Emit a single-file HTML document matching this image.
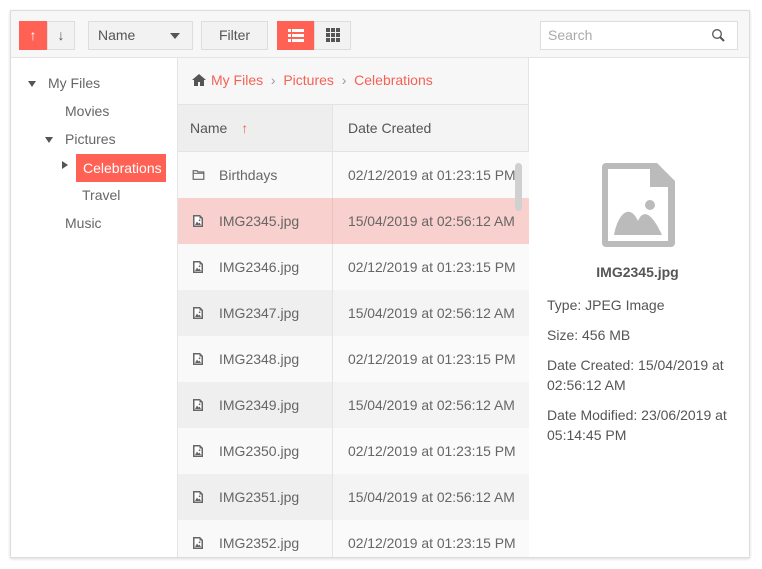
<!DOCTYPE html>
<html><head><meta charset="utf-8"><style>
*{box-sizing:border-box;margin:0;padding:0}
body{width:762px;height:569px;background:#fff;font-family:"Liberation Sans",sans-serif;color:#555;font-size:14px;position:relative;overflow:hidden}
.box{position:absolute;left:10px;top:10px;width:740px;height:548px;border:1px solid #ddd;box-shadow:0 1px 3px rgba(0,0,0,.15);overflow:hidden}
.tb{position:absolute;left:0;top:0;width:738px;height:47px;background:#f7f7f7;border-bottom:1px solid #e4e4e4}
.btn{position:absolute;top:10px;height:29px;border:1px solid #ddd;background:#f2f2f2;font-size:14px;line-height:27px;color:#555}
.tree{position:absolute;left:0;top:47px;width:167px;height:501px;border-right:1px solid #e4e4e4}
.ti{position:absolute;font-size:14px;color:#666}
.grid{position:absolute;left:167px;top:47px;width:351px;height:501px;border-right:1px solid #e4e4e4}
.bc{height:47px;background:#f7f7f7;border-bottom:1px solid #e4e4e4;line-height:45px;color:#f36257;font-size:14px;padding-left:14px}
.hd{height:47px;background:#f4f4f4;border-bottom:1px solid #e4e4e4;position:relative;line-height:46px}
.row{height:46px;position:relative;line-height:46px;font-size:14px;color:#666}
.c1{position:absolute;left:0;top:0;width:155px;height:100%;border-right:1px solid #e4e4e4;padding-left:41px}
.c2{position:absolute;left:155px;top:0;width:196px;height:100%;padding-left:15px;white-space:nowrap;font-size:13.9px}
.ic{position:absolute;left:14px;top:17px;width:12px;height:12px}
.det{position:absolute;left:519px;top:47px;width:219px;height:501px;font-size:14px;color:#555}
</style></head><body>
<div class="box">
 <div class="tb">
  <div class="btn" style="left:8px;width:28px;background:#ff6155;border-color:#ff6155;color:#fff;text-align:center">↑</div>
  <div class="btn" style="left:36px;width:28px;text-align:center">↓</div>
  <div class="btn" style="left:77px;width:105px;padding-left:9px">Name<span style="position:absolute;right:12px;top:11px;border:5px solid transparent;border-top:6px solid #555;border-bottom:0"></span></div>
  <div class="btn" style="left:190px;width:67px;text-align:center">Filter</div>
  <div class="btn" style="left:266px;width:37px;background:#ff6155;border-color:#ff6155">
   <svg width="37" height="27" viewBox="0 0 37 27"><g fill="#fff"><rect x="10" y="7" width="3" height="3"/><rect x="14" y="7" width="12" height="3"/><rect x="10" y="12" width="3" height="3"/><rect x="14" y="12" width="12" height="3"/><rect x="10" y="17" width="3" height="3"/><rect x="14" y="17" width="12" height="3"/></g></svg></div>
  <div class="btn" style="left:303px;width:37px">
   <svg width="37" height="27" viewBox="0 0 37 27"><g fill="#555"><rect x="11" y="6" width="4" height="4"/><rect x="16" y="6" width="4" height="4"/><rect x="21" y="6" width="4" height="4"/><rect x="11" y="11" width="4" height="4"/><rect x="16" y="11" width="4" height="4"/><rect x="21" y="11" width="4" height="4"/><rect x="11" y="16" width="4" height="4"/><rect x="16" y="16" width="4" height="4"/><rect x="21" y="16" width="4" height="4"/></g></svg></div>
  <div class="btn" style="left:529px;width:198px;background:#fff;padding-left:7px;color:#aaa">Search
   <svg style="position:absolute;right:10px;top:6px" width="16" height="16" viewBox="0 0 16 16"><circle cx="6" cy="6" r="4.3" fill="none" stroke="#555" stroke-width="1.3"/><path d="M9 9l4 4" stroke="#555" stroke-width="2"/></svg></div>
 </div>
 <div class="tree">
  <span style="position:absolute;left:17px;top:23px;border:4px solid transparent;border-top:6px solid #555;border-bottom:0"></span>
  <div class="ti" style="left:37px;top:17px">My Files</div>
  <div class="ti" style="left:54px;top:45px">Movies</div>
  <span style="position:absolute;left:34px;top:79px;border:4px solid transparent;border-top:6px solid #555;border-bottom:0"></span>
  <div class="ti" style="left:54px;top:73px">Pictures</div>
  <span style="position:absolute;left:51px;top:103px;border:4px solid transparent;border-left:6px solid #555;border-right:0"></span>
  <div class="ti" style="left:65px;top:96px;width:90px;height:28px;background:#ff6155;color:#fff;line-height:28px;padding-left:7px">Celebrations</div>
  <div class="ti" style="left:71px;top:129px">Travel</div>
  <div class="ti" style="left:54px;top:157px">Music</div>
 </div>
 <div class="grid">
  <div class="bc"><svg width="14" height="12" viewBox="0 0 14 12" style="vertical-align:-1px;margin-right:5px"><path d="M7 0L0 6h2v6h4V8h2v4h4V6h2z" fill="#555"/></svg>My Files <span style="color:#999">&nbsp;›&nbsp;</span> Pictures <span style="color:#999">&nbsp;›&nbsp;</span> Celebrations</div>
  <div class="hd"><div class="c1" style="padding-left:12px;background:#eee">Name <span style="color:#f36257;margin-left:10px">↑</span></div><div class="c2" style="font-size:14px">Date Created</div></div>
  <div id="rows"></div>
  <div style="position:absolute;left:337px;top:105px;width:7px;height:48px;background:#d0d0d0;border-radius:4px"></div>
 </div>
 <div class="det">
  <svg style="position:absolute;left:72px;top:105px" width="73" height="84" viewBox="0 0 73 84"><path d="M4 0H55L73 18V80a4 4 0 0 1-4 4H4a4 4 0 0 1-4-4V4a4 4 0 0 1 4-4z" fill="#bbb"/><path d="M6 6H48V24H66V78H6z" fill="#fff"/><circle cx="48" cy="42" r="5" fill="#bbb"/><path d="M12 72C16 50 28 40 36 58C40 48 48 46 60 72z" fill="#bbb"/></svg>
  <div style="position:absolute;left:-2px;width:219px;top:206px;text-align:center;font-weight:bold">IMG2345.jpg</div>
  <div style="position:absolute;left:17px;top:237px;width:200px;line-height:20px">Type: JPEG Image<div style="height:10px"></div>Size: 456 MB<div style="height:10px"></div>Date Created: 15/04/2019 at 02:56:12 AM<div style="height:10px"></div>Date Modified: 23/06/2019 at 05:14:45 PM</div>
 </div>
</div>
<script>
var d1="02/12/2019 at 01:23:15 PM",d2="15/04/2019 at 02:56:12 AM";
var names=["Birthdays","IMG2345.jpg","IMG2346.jpg","IMG2347.jpg","IMG2348.jpg","IMG2349.jpg","IMG2350.jpg","IMG2351.jpg","IMG2352.jpg"];
var h="";
var img='<svg class="ic" viewBox="0 0 12 12"><path d="M1 0H8L11 3V12H1z" fill="#666"/><path d="M2.5 1.5H7.5V3.5H9.5V10.5H2.5z" fill="#fff"/><path d="M3 10L5 6.5 6.5 8.5 7.5 7.5 9 10z" fill="#666"/><circle cx="7.6" cy="5.3" r="0.9" fill="#666"/></svg>';
var fold='<svg class="ic" viewBox="0 0 12 12" style="width:13px"><path d="M0.7 1.7H4.5L5.5 3H11.3V10.3H0.7z" fill="none" stroke="#666" stroke-width="1.2"/><path d="M0.7 4.3H11.3" stroke="#666" stroke-width="1"/></svg>';
for(var i=0;i<names.length;i++){
 var sel=i==1, alt=(i%2==1);
 var b1=sel?"#f8d0cd":(alt?"#efefef":"#f9f9f9"), b2=sel?"#f8d0cd":(alt?"#f4f4f4":"#fafafa");
 var br=sel?"border-right-color:#f0c0bc":"";
 h+='<div class="row"><div class="c1" style="background:'+b1+';'+br+'">'+(i==0?fold:img)+names[i]+'</div><div class="c2" style="background:'+b2+'">'+(i%2==1?d2:d1)+'</div></div>';
}
document.getElementById("rows").innerHTML=h;
</script>
</body></html>
